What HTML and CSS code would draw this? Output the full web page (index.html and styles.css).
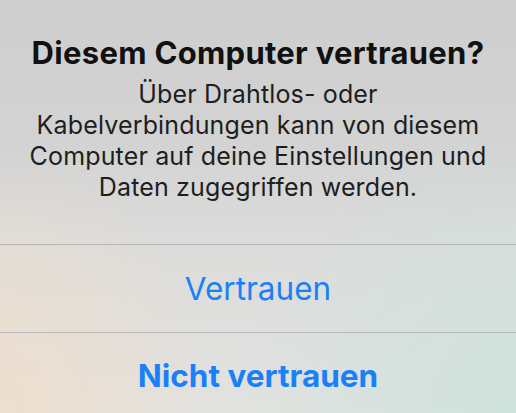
FILE: index.html
```html
<!DOCTYPE html>
<html lang="de">
<head>
<meta charset="utf-8">
<link rel="stylesheet" href="styles.css">
</head>
<body>
<div class="alert">
  <div class="content">
    <h1 class="title">Diesem Computer vertrauen?</h1>
    <p class="message">Über Drahtlos- oder<br>Kabelverbindungen kann von diesem<br>Computer auf deine Einstellungen und<br>Daten zugegriffen werden.</p>
  </div>
  <div class="action">Vertrauen</div>
  <div class="action bold">Nicht vertrauen</div>
</div>
</body>
</html>
```
FILE: styles.css
```css
html, body {
  margin: 0;
  padding: 0;
}
body {
  width: 516px;
  height: 413px;
  overflow: hidden;
  font-family: Inter, "Noto Sans", sans-serif;
}
.alert {
  width: 516px;
  height: 413px;
  display: flex;
  flex-direction: column;
  background:
    radial-gradient(ellipse 220px 260px at 0% 100%, rgba(238,222,204,0.95), rgba(238,222,204,0) 100%),
    radial-gradient(ellipse 280px 280px at 100% 100%, rgba(205,226,220,0.95), rgba(205,226,220,0) 100%),
    linear-gradient(to bottom, #cecece 0%, #d3d3d3 35%, #dcdcdb 60%, #e2e2e0 100%);
}
.content {
  height: 245px;
  box-sizing: border-box;
  padding-top: 34px;
  text-align: center;
  border-bottom: 1px solid #b4b4b4;
}
.title {
  margin: 0;
  font-size: 31px;
  line-height: 38px;
  font-weight: 700;
  color: #111;
  letter-spacing: 0.3px;
}
.message {
  margin: 7px 0 0;
  font-size: 25px;
  line-height: 31px;
  font-weight: 400;
  color: #1e1e1e;
  letter-spacing: 0.15px;
}
.action {
  height: 87px;
  display: flex;
  align-items: center;
  justify-content: center;
  font-size: 31.5px;
  color: #1a80f7;
  border-bottom: 1px solid #b8b8b8;
}
.action.bold {
  font-weight: 700;
  border-bottom: none;
  flex: 1;
  padding-top: 4px;
}
```
